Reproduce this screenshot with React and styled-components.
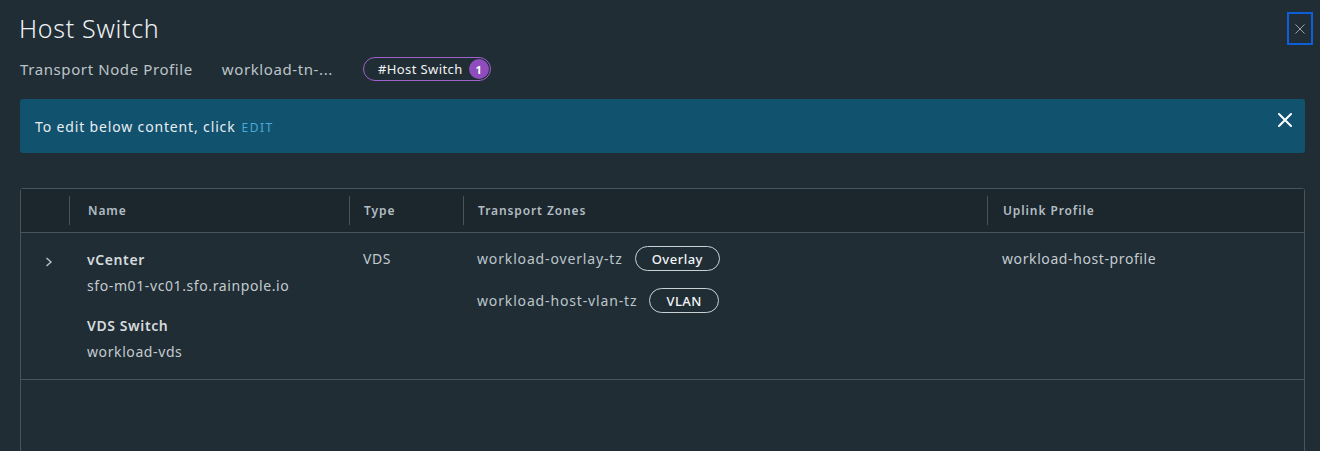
import React from 'react'
import styled, { createGlobalStyle } from 'styled-components'

const GlobalStyle = createGlobalStyle`
  html, body {
    margin: 0;
    padding: 0;
    background: #202d35;
    overflow: hidden;
  }
  * { box-sizing: border-box; }
`

const Page = styled.div`
  height: 100vh;
  overflow: hidden;
  padding: 12px 15px 0 20px;
  font-family: "Noto Sans", "Open Sans", sans-serif;
  letter-spacing: 0.6px;
  color: #c5ccd1;
`

const HeaderRow = styled.div`
  display: flex;
  justify-content: space-between;
  align-items: flex-start;
  margin-right: -8px;
`

const Title = styled.h1`
  margin: 0 0 0 -1px;
  font-size: 25px;
  line-height: 32px;
  font-weight: 300;
  letter-spacing: 0.7px;
  color: #eef1f3;
`

const CloseButton = styled.button`
  width: 26px;
  height: 33px;
  padding: 0;
  border: 2px solid #0c5fd8;
  background: transparent;
  display: flex;
  align-items: center;
  justify-content: center;
  cursor: pointer;
`

const SubRow = styled.div`
  display: flex;
  align-items: center;
  height: 24px;
  margin-top: 12px;
  font-size: 15px;
  color: #bcc4c9;
`

const SubText = styled.span`
  margin-right: ${p => p.gap || 0}px;
`

const Pill = styled.span`
  display: inline-flex;
  align-items: center;
  height: 24px;
  padding: 0 1px 0 14px;
  border: 1px solid #9e62cc;
  border-radius: 12px;
  font-size: 13px;
  letter-spacing: 0.4px;
  color: #f2f2f2;
`

const Badge = styled.span`
  width: 20px;
  height: 20px;
  margin-left: 6px;
  border-radius: 50%;
  background: #8e4cbd;
  color: #fff;
  font-size: 11px;
  font-weight: 700;
  letter-spacing: 0;
  display: flex;
  align-items: center;
  justify-content: center;
`

const Alert = styled.div`
  margin-top: 18px;
  height: 54px;
  padding: 0 13px 0 15px;
  background: #11526f;
  border-radius: 3px;
  display: flex;
  align-items: center;
  justify-content: space-between;
  font-size: 14px;
  letter-spacing: 0.85px;
  color: #e9edef;
`

const EditLink = styled.a`
  margin-left: 6px;
  font-size: 12px;
  letter-spacing: 1.5px;
  color: #4aa9d8;
  cursor: pointer;
`

const AlertClose = styled.span`
  display: flex;
  align-self: flex-start;
  margin-top: 14px;
  cursor: pointer;
`

const Table = styled.div`
  margin-top: 35px;
  height: 320px;
  border: 1px solid #47545e;
  border-radius: 3px;
`

const Grid = styled.div`
  display: grid;
  grid-template-columns: 48px 280px 114px 524px 1fr;
`

const HeadRow = styled(Grid)`
  height: 44px;
  background: #1b262d;
  border-bottom: 1px solid #47545e;
  align-items: center;
`

const HeadCell = styled.div`
  display: flex;
  align-items: center;
`

const HeadLabel = styled.span`
  border-left: 1px solid #47545e;
  line-height: 29px;
  padding-left: ${p => p.pad || 14}px;
  font-size: 12px;
  font-weight: 600;
  letter-spacing: 0.9px;
  color: #b3bdc3;
  width: 100%;
`

const BodyRow = styled(Grid)`
  border-bottom: 1px solid #47545e;
`

const Cell = styled.div`
  padding: ${p => p.top || 13}px 0 14px ${p => p.pad || 14}px;
  font-size: 14px;
  line-height: 26px;
  letter-spacing: ${p => p.spacing || 0.6}px;
`

const ExpandCell = styled.div`
  display: flex;
  align-items: flex-start;
  padding: 24px 0 0 24px;
  cursor: pointer;
`

const Group = styled.div`
  & + & { margin-top: 14px; }
`

const Label = styled.div`
  font-weight: 600;
  color: #d6dbde;
`

const Value = styled.div`
  color: #c3cbd0;
`

const Zone = styled.div`
  display: flex;
  align-items: center;
  height: 25px;
  & + & { margin-top: 17px; }
`

const ZoneName = styled.span`
  color: #bcc5ca;
`

const Tag = styled.span`
  margin-left: 12px;
  height: 25px;
  padding: 0 16px;
  border: 1px solid #c9d0d4;
  border-radius: 13px;
  display: inline-flex;
  align-items: center;
  font-size: 13px;
  font-weight: 500;
  letter-spacing: 0.5px;
  color: #f3f5f6;
`

function Cross({ size, stroke, width }) {
  return (
    <svg width={size} height={size} viewBox="0 0 14 14">
      <path d="M1 1 L13 13 M13 1 L1 13" stroke={stroke} strokeWidth={width} strokeLinecap="round" />
    </svg>
  )
}

function App() {
  return (
    <Page>
      <GlobalStyle />
      <HeaderRow>
        <Title>Host Switch</Title>
        <CloseButton aria-label="close">
          <Cross size={10} stroke="#9aa3a9" width={1.4} />
        </CloseButton>
      </HeaderRow>
      <SubRow>
        <SubText gap={29}>Transport Node Profile</SubText>
        <SubText gap={30}>workload-tn-...</SubText>
        <Pill>#Host Switch<Badge>1</Badge></Pill>
      </SubRow>
      <Alert>
        <span>To edit below content, click<EditLink>EDIT</EditLink></span>
        <AlertClose>
          <Cross size={14} stroke="#ffffff" width={2} />
        </AlertClose>
      </Alert>
      <Table>
        <HeadRow>
          <HeadCell />
          <HeadCell><HeadLabel pad={18}>Name</HeadLabel></HeadCell>
          <HeadCell><HeadLabel>Type</HeadLabel></HeadCell>
          <HeadCell><HeadLabel>Transport Zones</HeadLabel></HeadCell>
          <HeadCell><HeadLabel pad={15}>Uplink Profile</HeadLabel></HeadCell>
        </HeadRow>
        <BodyRow>
          <ExpandCell>
            <svg width="8" height="10" viewBox="0 0 8 10">
              <path d="M1.5 1 L6 5 L1.5 9" fill="none" stroke="#b9c3c9" strokeWidth="1.4" />
            </svg>
          </ExpandCell>
          <Cell pad={18} top={14}>
            <Group>
              <Label>vCenter</Label>
              <Value>sfo-m01-vc01.sfo.rainpole.io</Value>
            </Group>
            <Group>
              <Label>VDS Switch</Label>
              <Value>workload-vds</Value>
            </Group>
          </Cell>
          <Cell><Value>VDS</Value></Cell>
          <Cell spacing={0.85}>
            <Zone>
              <ZoneName>workload-overlay-tz</ZoneName>
              <Tag>Overlay</Tag>
            </Zone>
            <Zone>
              <ZoneName>workload-host-vlan-tz</ZoneName>
              <Tag>VLAN</Tag>
            </Zone>
          </Cell>
          <Cell pad={15}><Value>workload-host-profile</Value></Cell>
        </BodyRow>
      </Table>
    </Page>
  )
}

export default App
